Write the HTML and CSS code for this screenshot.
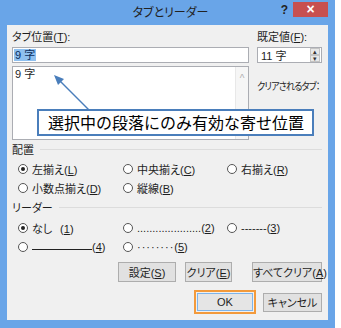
FILE: index.html
```html
<!DOCTYPE html>
<html lang="ja">
<head>
    <meta charset="UTF-8">
    <title>タブとリーダー</title>
    <link rel="stylesheet" href="styles.css">
</head>
<body>
    <div class="window">
        <div class="title-bar">
            <span class="title">タブとリーダー</span>
            <span class="help">?</span>
            <span class="close">×</span>
        </div>
        <div class="client">
            <div class="top">
                <div class="tab-col">
                    <div class="label">タブ位置(<u>T</u>):</div>
                    <div class="textbox"><span class="sel">9 字</span></div>
                    <div class="listbox">
                        <div class="list-item">9 字</div>
                        <div class="scrollbar"><span class="up">^</span></div>
                    </div>
                </div>
                <div class="side-col">
                    <div class="label">既定値(<u>F</u>):</div>
                    <div class="spinbox">
                        <span>11 字</span>
                        <div class="spin">
                            <span class="spin-btn">▴</span>
                            <span class="spin-btn">▾</span>
                        </div>
                    </div>
                    <div class="label clear-label"><span class="narrow">クリアされるタブ：</span></div>
                </div>
            </div>

            <div class="group-head"><span>配置</span><span class="rule"></span></div>
            <div class="options">
                <div class="opt"><span class="radio on"></span><span>左揃え(<u>L</u>)</span></div>
                <div class="opt"><span class="radio"></span><span>中央揃え(<u>C</u>)</span></div>
                <div class="opt"><span class="radio"></span><span>右揃え(<u>R</u>)</span></div>
                <div class="opt"><span class="radio"></span><span>小数点揃え(<u>D</u>)</span></div>
                <div class="opt"><span class="radio"></span><span>縦線(<u>B</u>)</span></div>
            </div>

            <div class="group-head leader-head"><span>リーダー</span><span class="rule"></span></div>
            <div class="options leaders">
                <div class="opt"><span class="radio on"></span><span>なし<span class="gap"></span>(<u>1</u>)</span></div>
                <div class="opt"><span class="radio"></span><span>.....................(<u>2</u>)</span></div>
                <div class="opt"><span class="radio"></span><span>-------(<u>3</u>)</span></div>
                <div class="opt"><span class="radio"></span><span><span class="underline-leader"></span>(<u>4</u>)</span></div>
                <div class="opt"><span class="radio"></span><span><span class="mid-dots">········</span>(<u>5</u>)</span></div>
            </div>

            <div class="button-row">
                <button class="btn set-btn">設定(<u>S</u>)</button>
                <button class="btn clear-btn">クリア(<u>E</u>)</button>
                <button class="btn clear-all-btn">すべてクリア(<u>A</u>)</button>
            </div>
            <div class="button-row ok-row">
                <span class="focus-ring"><button class="btn ok-btn">OK</button></span>
                <button class="btn cancel-btn">キャンセル</button>
            </div>

            <!-- callout over the list -->
            <svg class="arrow" width="60" height="50" viewBox="0 0 60 50">
                <line x1="46" y1="44" x2="13" y2="11" stroke="#4a7ebb" stroke-width="1.5"/>
                <polygon points="9,7 19,11 13,17" fill="#4a7ebb"/>
            </svg>
            <div class="callout">選択中の段落にのみ有効な寄せ位置</div>
        </div>
    </div>
</body>
</html>
```

FILE: styles.css
```css
:root {
    --frame: #69a5e8;
    --client: #f0f0f0;
    --text: #1e1e1e;
    --line: #dcdcdc;
    --border: #abadb3;
    --callout: #4a7ebb;
}

body {
    margin: 0;
    background: #ffffff;
    font-family: 'Liberation Sans', 'Noto Sans CJK JP', sans-serif;
    font-feature-settings: "palt";
    font-size: 11px;
    color: var(--text);
}

u {
    text-decoration: underline;
}

.window {
    width: 335px;
    height: 328px;
    background: var(--frame);
    display: flex;
    flex-direction: column;
    box-sizing: border-box;
    padding: 0 7px 8px 7px;
}

.title-bar {
    height: 25px;
    position: relative;
    display: flex;
    justify-content: center;
    align-items: center;
}

.title {
    font-size: 12px;
    color: #222;
    margin-top: -2px;
    margin-left: 6px;
}

.help {
    position: absolute;
    right: 40px;
    top: 3px;
    font-weight: bold;
    font-size: 12px;
    color: #222;
}

.close {
    position: absolute;
    right: 0;
    top: 2px;
    width: 35px;
    height: 15px;
    background: #c75050;
    color: #fff;
    font-weight: bold;
    font-size: 14px;
    line-height: 15px;
    text-align: center;
}

.client {
    flex: 1;
    background: var(--client);
    padding: 5px 6px 0 5px;
    position: relative;
}

.top {
    display: flex;
    gap: 8px;
}

.tab-col {
    width: 237px;
    display: flex;
    flex-direction: column;
}

.side-col {
    width: 65px;
    display: flex;
    flex-direction: column;
}

.label {
    height: 15px;
    line-height: 15px;
    margin-bottom: 2px;
    white-space: nowrap;
}

.textbox {
    height: 16px;
    box-sizing: border-box;
    border: 1px solid var(--border);
    background: #fff;
    padding: 0 1px;
    display: flex;
    align-items: center;
}

.sel {
    background: #8ec0f0;
    color: #0b2d5c;
    line-height: 12px;
    padding: 0 1px;
}

.listbox {
    margin-top: 3px;
    height: 74px;
    box-sizing: border-box;
    border: 1px solid var(--border);
    background: #fff;
    display: flex;
    justify-content: space-between;
}

.list-item {
    padding: 1px 2px;
    line-height: 13px;
}

.scrollbar {
    width: 12px;
    background: #f6f6f6;
    border-left: 1px solid #e8e8e8;
    display: flex;
    justify-content: center;
}

.up {
    color: #b0b0b0;
    font-size: 10px;
    margin-top: 6px;
}

.spinbox {
    height: 16px;
    box-sizing: border-box;
    border: 1px solid var(--border);
    background: #fff;
    display: flex;
    justify-content: space-between;
    align-items: center;
    padding-left: 3px;
}

.spin {
    width: 10px;
    height: 14px;
    display: flex;
    flex-direction: column;
    margin-right: 1px;
}

.spin-btn {
    flex: 1;
    background: #e8e8e8;
    border: 1px solid #c4c4c4;
    font-size: 7px;
    line-height: 5px;
    text-align: center;
    color: #333;
}

.clear-label {
    margin-top: 16px;
    font-size: 10px;
}

.narrow {
    display: inline-block;
    letter-spacing: -1px;
    transform: scaleX(0.92);
    transform-origin: left center;
}

.group-head {
    display: flex;
    align-items: center;
    gap: 6px;
    height: 14px;
    margin-top: 2px;
}

.leader-head {
    margin-top: 3px;
}

.rule {
    flex: 1;
    height: 1px;
    background: var(--line);
}

.options {
    display: grid;
    grid-template-columns: 105px 104px auto;
    padding-left: 6px;
    margin-top: 3px;
}

.leaders {
    margin-top: 4px;
}

.opt {
    display: flex;
    align-items: center;
    height: 19px;
    gap: 4px;
    white-space: nowrap;
}

.radio {
    width: 10px;
    height: 10px;
    box-sizing: border-box;
    border: 1px solid #555;
    border-radius: 50%;
    background: #fff;
    display: flex;
    align-items: center;
    justify-content: center;
}

.radio.on::after {
    content: '';
    width: 4px;
    height: 4px;
    border-radius: 50%;
    background: #222;
}

.gap {
    display: inline-block;
    width: 8px;
}

.underline-leader {
    display: inline-block;
    width: 60px;
    height: 1px;
    background: #222;
    vertical-align: 1px;
}

.mid-dots {
    letter-spacing: 1px;
}

.button-row {
    display: flex;
    justify-content: flex-end;
    align-items: center;
    gap: 9px;
    margin-top: 6px;
}

.btn {
    font-family: inherit;
    font-feature-settings: "palt";
    font-size: 11px;
    color: var(--text);
    background: #e1e1e1;
    border: 1px solid #adadad;
    height: 20px;
    padding: 0;
    white-space: nowrap;
}

.set-btn { width: 58px; }
.clear-btn { width: 47px; margin-right: 11px; }
.clear-all-btn { width: 70px; }

.ok-row {
    margin-top: 8px;
    gap: 7px;
}

.focus-ring {
    display: flex;
    border: 2px solid #f39a3b;
    padding: 1px;
}

.ok-btn {
    width: 56px;
    height: 18px;
    border-color: #7eb4ea;
    background: #e5e5e5;
}

.cancel-btn {
    width: 59px;
    height: 19px;
}

.arrow {
    position: absolute;
    left: 38px;
    top: 43px;
}

.callout {
    position: absolute;
    left: 30px;
    top: 84px;
    width: 277px;
    height: 27px;
    box-sizing: border-box;
    border: 2px solid var(--callout);
    background: #fff;
    color: #000;
    font-family: 'Noto Sans CJK JP', sans-serif;
    font-feature-settings: normal;
    font-size: 16px;
    line-height: 23px;
    padding-left: 9px;
}
```
